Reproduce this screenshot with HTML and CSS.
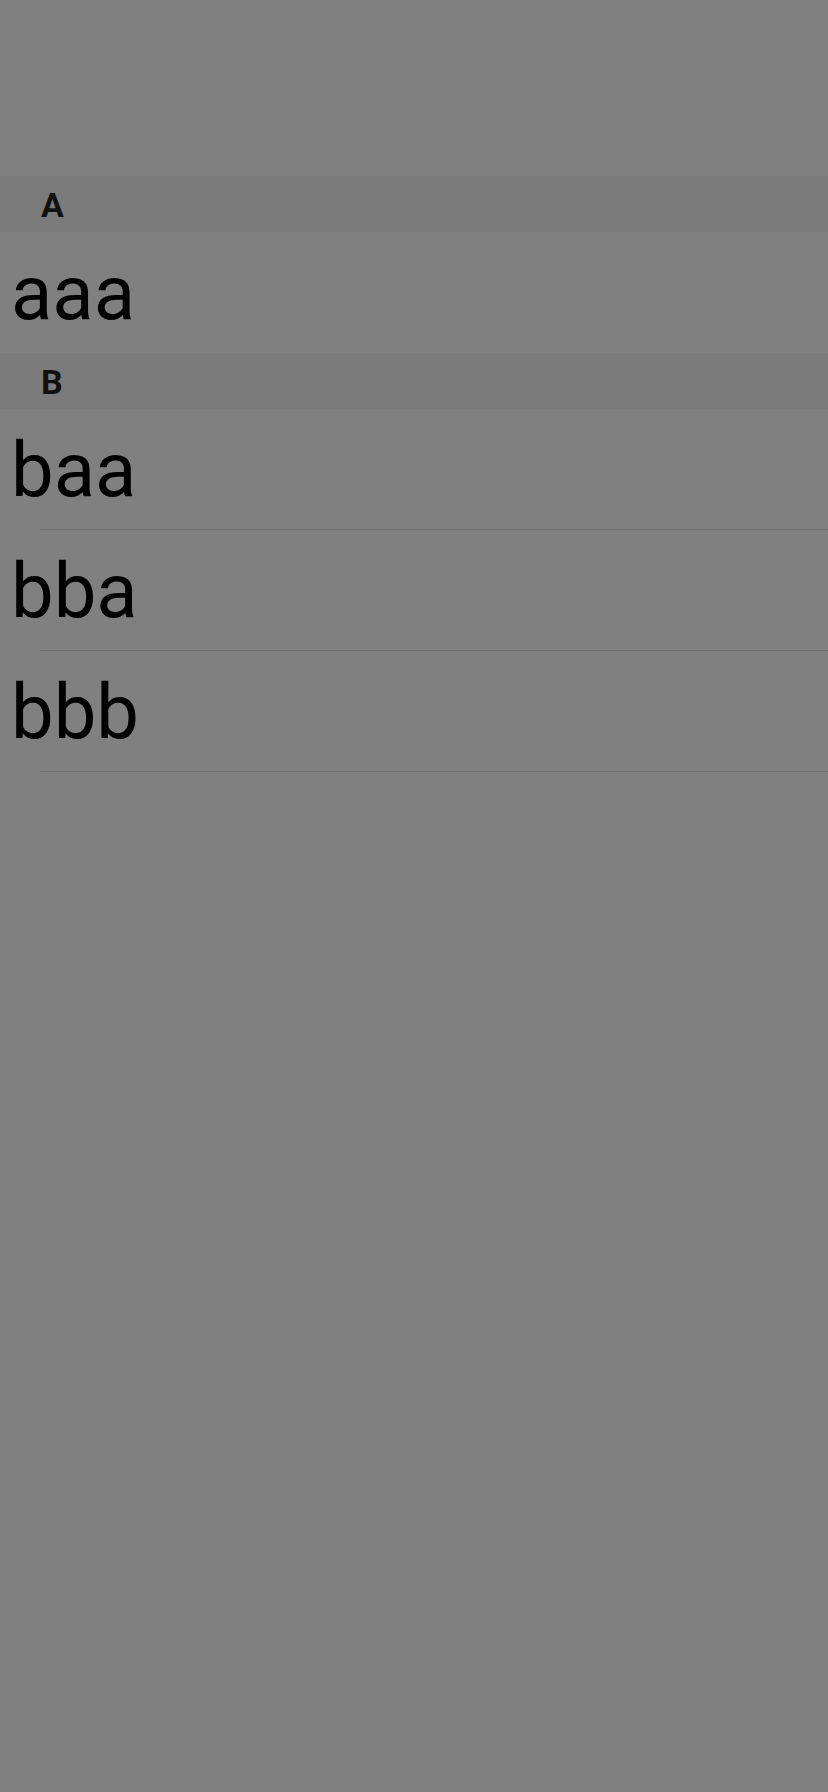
FILE: index.html
```html
<!DOCTYPE html>
<html>
<head>
<meta charset="utf-8">
<link rel="stylesheet" href="styles.css">
</head>
<body>
<div class="screen">
  <div class="top-space"></div>
  <div class="list">
    <section class="section">
      <div class="section-header">A</div>
      <div class="row row-last-plain"><span class="row-text">aaa</span></div>
    </section>
    <section class="section">
      <div class="section-header">B</div>
      <div class="row"><span class="row-text">baa</span></div>
      <div class="row"><span class="row-text">bba</span></div>
      <div class="row"><span class="row-text">bbb</span></div>
    </section>
  </div>
</div>
</body>
</html>
```

FILE: styles.css
```css
html, body {
  margin: 0;
  padding: 0;
  background: #808080;
}
.screen {
  width: 828px;
  min-height: 1792px;
  background: #808080;
  display: flex;
  flex-direction: column;
  font-family: Roboto, "Noto Sans", sans-serif;
}
.top-space {
  height: 176px;
}
.list {
  display: flex;
  flex-direction: column;
}
.section {
  display: flex;
  flex-direction: column;
}
.section-header {
  height: 56px;
  box-sizing: border-box;
  padding-top: 8px;
  line-height: 42px;
  padding-left: 41px;
  background: #7b7b7b;
  color: #111111;
  font-size: 34px;
  font-weight: 700;
}
.row {
  height: 120px;
  padding-left: 11px;
  margin-bottom: 1px;
  display: flex;
  position: relative;
}
.row::after {
  content: "";
  position: absolute;
  left: 40px;
  right: 0;
  bottom: -1px;
  height: 1px;
  background: #6e6e6e;
}
.row-last-plain::after {
  display: none;
}
.row-text {
  font-size: 76px;
  line-height: 123px;
  height: 120px;
  color: #000000;
}
```
